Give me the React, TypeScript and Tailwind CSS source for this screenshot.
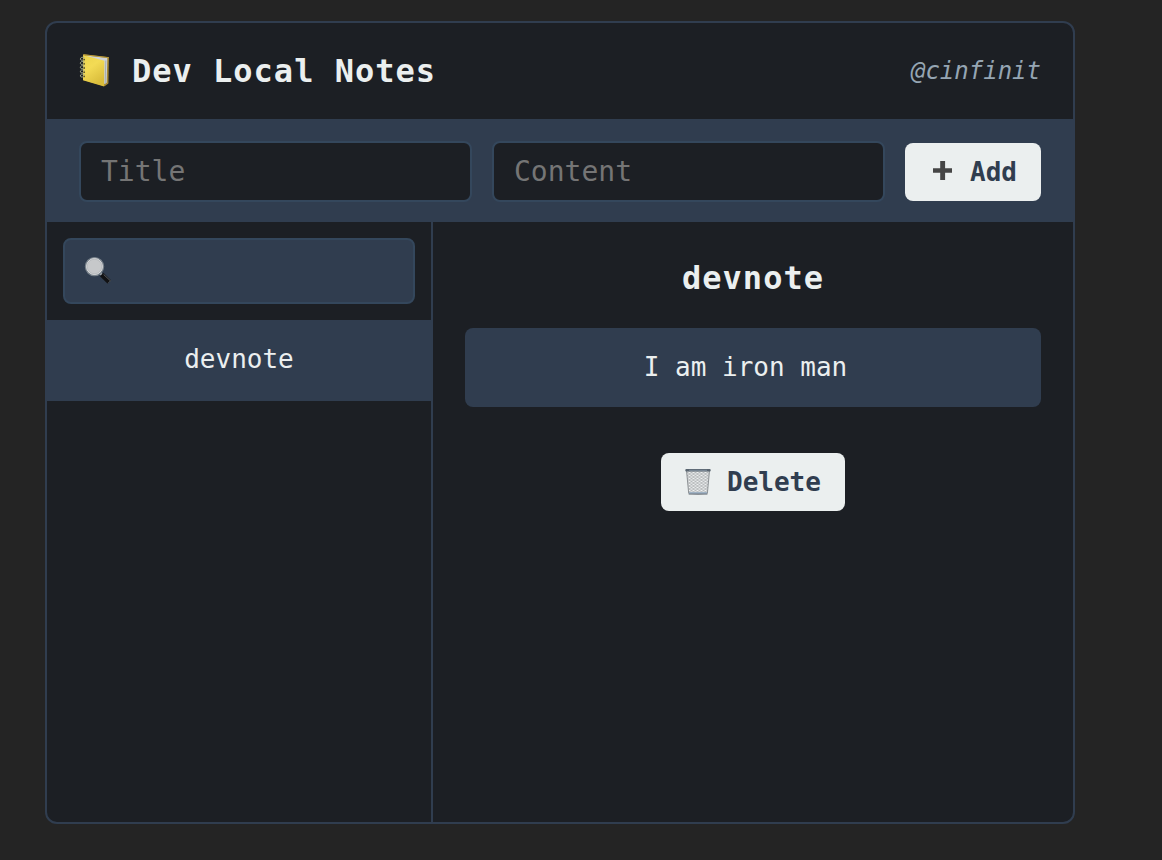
import React from "react";

function NotebookIcon() {
  return (
    <svg width="32" height="36" viewBox="0 0 32 36" className="shrink-0" aria-hidden="true">
      <defs>
        <linearGradient id="cover" x1="0" y1="0" x2="0.5" y2="1">
          <stop offset="0" stopColor="#ecd44c" />
          <stop offset="0.45" stopColor="#f3db55" />
          <stop offset="1" stopColor="#dabd3c" />
        </linearGradient>
      </defs>
      <path d="M4 1.2 29.9 4.2 29.4 30.6 25.6 33.3 4.2 27Z" fill="#a88a35" />
      <path d="M7 2.5 28.3 5 27.7 29.7 25.3 31Z" fill="#cfd3d6" />
      <path d="M26.8 7.5 26.2 31" stroke="#9fa8b0" strokeWidth="0.9" />
      <path d="M4.2 2 25.4 7.7 25.1 33.4 4 27.3Z" fill="url(#cover)" />
      <path d="M4.6 1.7 29.8 4.6" stroke="#b89a3a" strokeWidth="1" />
      <g fill="none" stroke="#aab08c" strokeWidth="1">
        <path d="M5.6 4.9C3 3.4 1 4.9 1.4 6.3 1.8 7.6 3.4 7.3 4.6 6.8" />
        <path d="M5.6 9.1C3 7.6 1 9.1 1.4 10.5 1.8 11.8 3.4 11.5 4.6 11" />
        <path d="M5.6 13.3C3 11.8 1 13.3 1.4 14.7 1.8 16 3.4 15.7 4.6 15.2" />
        <path d="M5.6 17.5C3 16 1 17.5 1.4 18.9 1.8 20.2 3.4 19.9 4.6 19.4" />
        <path d="M5.6 21.7C3 20.2 1 21.7 1.4 23.1 1.8 24.4 3.4 24.1 4.6 23.6" />
      </g>
      <g fill="#5f582f">
        <circle cx="5.2" cy="6.6" r="0.9" />
        <circle cx="5.2" cy="10.8" r="0.9" />
        <circle cx="5.2" cy="15" r="0.9" />
        <circle cx="5.2" cy="19.2" r="0.9" />
        <circle cx="5.2" cy="23.4" r="0.9" />
      </g>
    </svg>
  );
}

function PlusIcon() {
  return (
    <svg width="20" height="20" viewBox="0 0 20 20" className="mb-0.5 shrink-0" aria-hidden="true">
      <path d="M7.2 0h4.9v7.2H19v4.6h-6.9V19H7.2v-7.2H0V7.2h7.2Z" fill="#454545" />
    </svg>
  );
}

function SearchIcon() {
  return (
    <svg width="28" height="28" viewBox="0 0 28 28" className="mb-0.5 shrink-0" aria-hidden="true">
      <path d="M16 17 19 20" stroke="#a9b0b6" strokeWidth="2.4" />
      <path d="M17.6 18.6 25.3 26" stroke="#111214" strokeWidth="4.8" />
      <path d="M19.6 18.4 26.4 24.8" stroke="#63676b" strokeWidth="0.9" />
      <path d="M26.8 24.3 23.8 27.4" stroke="#4a4d50" strokeWidth="0.9" />
      <circle cx="10.5" cy="10.6" r="9" fill="#c6c8ca" stroke="#77818a" strokeWidth="1.4" />
      <circle cx="10.5" cy="10.5" r="7.9" fill="none" stroke="#dfe1e2" strokeWidth="0.8" />
      <circle cx="10.5" cy="10.5" r="7.3" fill="none" stroke="#a4a9ad" strokeWidth="0.5" />
    </svg>
  );
}

function TrashIcon() {
  return (
    <svg width="26" height="28" viewBox="0 0 26 28" className="shrink-0" aria-hidden="true">
      <defs>
        <pattern id="mesh" x="0.5" width="4" height="3" patternUnits="userSpaceOnUse">
          <path d="M0 0 4 3M4 0 0 3" stroke="#8f9396" strokeWidth="0.6" />
        </pattern>
      </defs>
      <path d="M1.5 2.5h23l-2.1 22.8Q13 26.7 3.7 25.3Z" fill="#eef0f1" />
      <path d="M1.5 2.5h23l-2.1 22.8Q13 26.7 3.7 25.3Z" fill="url(#mesh)" stroke="#777c80" strokeWidth="0.8" />
      <path d="M4 24h18.1l-.2 2H4.2Z" fill="#9fb2c4" />
      <path d="M3.7 26.1h18.7" stroke="#5d656d" strokeWidth="0.9" />
      <rect x="0.3" y="1" width="25.4" height="2.4" rx="1" fill="#596570" />
      <path d="M4 2.3h18" stroke="#8fa0b0" strokeWidth="0.7" />
    </svg>
  );
}

const field =
  "h-[61px] min-w-0 flex-1 rounded-lg border-2 border-[#34475c] bg-[#1c1f24] px-5 text-[28px] text-[#ebefef] outline-none placeholder:text-[#757575]";
const button =
  "flex h-[58px] items-center rounded-lg bg-[#ebefef] text-[26px] font-bold text-[#303d4f]";

export default function App() {
  return (
    <div className="h-[860px] w-full bg-[#242424] pt-[21px] pl-[45px] font-['DejaVu_Sans_Mono',monospace] text-[#ebefef]">
      <main className="flex h-[803px] w-[1030px] flex-col overflow-hidden rounded-xl border-2 border-[#303d4f] bg-[#1c1f24]">
        <header className="flex h-24 shrink-0 items-center justify-between px-8">
          <div className="flex items-center">
            <NotebookIcon />
            <h1 className="ml-[21px] text-[32px] leading-10 font-bold tracking-[1px]">Dev Local Notes</h1>
          </div>
          <span className="text-2xl text-[#95a5b3] italic">@cinfinit</span>
        </header>

        <form
          className="flex h-[103px] shrink-0 items-center gap-5 bg-[#303d4f] px-8 pt-0.5"
          onSubmit={(e) => e.preventDefault()}
        >
          <input className={field} placeholder="Title" />
          <input className={field} placeholder="Content" />
          <button className={`${button} w-[136px] pl-7`}>
            <PlusIcon />
            <span className="ml-[17px] pt-0.5">Add</span>
          </button>
        </form>

        <div className="flex min-h-0 flex-1">
          <aside className="w-[386px] shrink-0 border-r-2 border-[#303d4f]">
            <div className="p-4">
              <div className="flex h-[66px] items-center rounded-lg border-2 border-[#34475c] bg-[#303d4f] pl-[19px]">
                <SearchIcon />
              </div>
            </div>
            <div className="flex h-[81px] items-center justify-center bg-[#303d4f] pb-0.5 text-[26px]">
              devnote
            </div>
          </aside>

          <section className="flex flex-1 flex-col items-center px-8 pt-9">
            <h2 className="text-[32px] leading-10 font-bold tracking-[1px]">devnote</h2>
            <p className="mt-[30px] flex h-[79px] w-full items-center justify-center rounded-lg bg-[#303d4f] pr-[15px] text-[26px]">
              I am iron man
            </p>
            <button className={`${button} mt-[46px] w-[184px] pl-6`}>
              <TrashIcon />
              <span className="ml-4">Delete</span>
            </button>
          </section>
        </div>
      </main>
    </div>
  );
}
